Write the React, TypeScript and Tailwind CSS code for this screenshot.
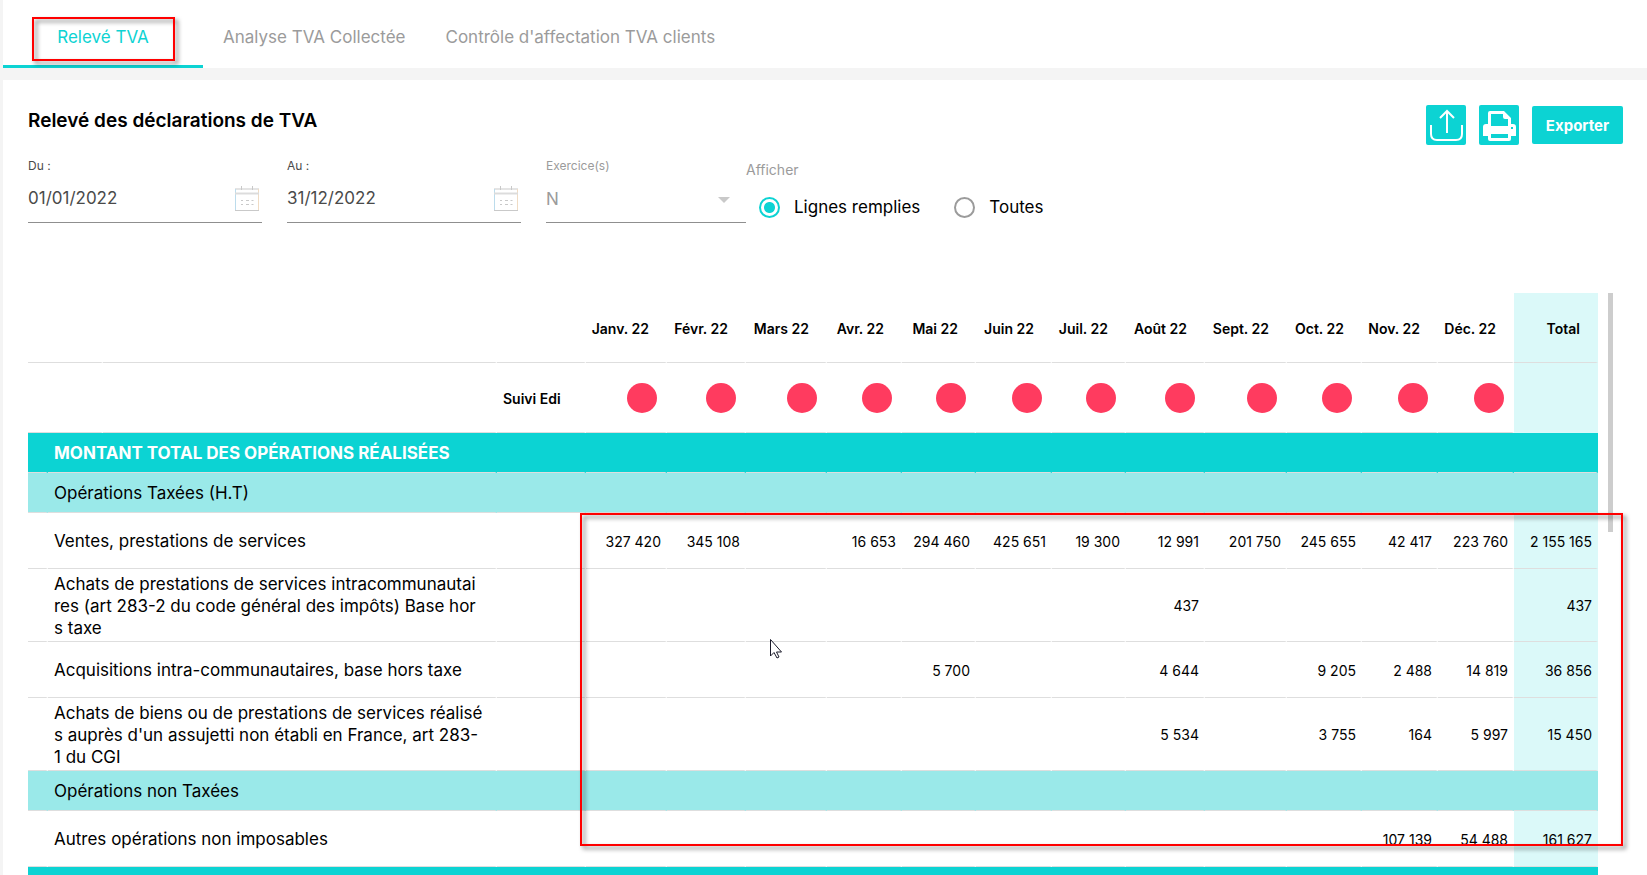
import { useState } from 'react';
import clsx from 'clsx';

type Row = {
    kind: 'section' | 'group' | 'line';
    label: string;
    tall?: boolean;
    values?: Record<number, string>;
    total?: string;
};

const TABS = ['Relevé TVA', 'Analyse TVA Collectée', "Contrôle d'affectation TVA clients"];

const MONTHS = [
    'Janv. 22', 'Févr. 22', 'Mars 22', 'Avr. 22', 'Mai 22', 'Juin 22',
    'Juil. 22', 'Août 22', 'Sept. 22', 'Oct. 22', 'Nov. 22', 'Déc. 22',
];

const ROWS: Row[] = [
    { kind: 'section', label: 'MONTANT TOTAL DES OPÉRATIONS RÉALISÉES' },
    { kind: 'group', label: 'Opérations Taxées (H.T)' },
    {
        kind: 'line',
        label: 'Ventes, prestations de services',
        values: {
            0: '327 420', 1: '345 108', 3: '16 653', 4: '294 460', 5: '425 651', 6: '19 300',
            7: '12 991', 8: '201 750', 9: '245 655', 10: '42 417', 11: '223 760',
        },
        total: '2 155 165',
    },
    {
        kind: 'line',
        tall: true,
        label: 'Achats de prestations de services intracommunautai\nres (art 283-2 du code général des impôts) Base hor\ns taxe',
        values: { 7: '437' },
        total: '437',
    },
    {
        kind: 'line',
        label: 'Acquisitions intra-communautaires, base hors taxe',
        values: { 4: '5 700', 7: '4 644', 9: '9 205', 10: '2 488', 11: '14 819' },
        total: '36 856',
    },
    {
        kind: 'line',
        tall: true,
        label: "Achats de biens ou de prestations de services réalisé\ns auprès d'un assujetti non établi en France, art 283-\n1 du CGI",
        values: { 7: '5 534', 9: '3 755', 10: '164', 11: '5 997' },
        total: '15 450',
    },
    { kind: 'group', label: 'Opérations non Taxées' },
    {
        kind: 'line',
        label: 'Autres opérations non imposables',
        values: { 10: '107 139', 11: '54 488' },
        total: '161 627',
    },
    { kind: 'section', label: '' },
];

const CELL = 'border-b border-r-2 border-b-[#dedede] border-r-transparent';
const HEAD = 'pt-0.5 pb-0 pl-0 pr-4 text-right font-semibold whitespace-nowrap';
const AMOUNT = 'pt-0.5 pb-0 pl-0 pr-1 text-right text-sm whitespace-nowrap';

function UploadIcon() {
    return (
        <svg width="40" height="40" viewBox="0 0 40 40" fill="none" stroke="white" strokeWidth="2">
            <path d="M21 28V6M14 13l7-7 7 7" />
            <path d="M5 20v9c0 4 2.500 6 6 6h19c3.500 0 6-2 6-6v-9" />
        </svg>
    );
}

function PrintIcon() {
    return (
        <svg width="40" height="40" viewBox="0 0 40 40">
            <path
                fill="white"
                fillRule="evenodd"
                d="M9 8q0-2 2-2h14l7 7v6h2q3 0 3 3v9h-5v3q0 2-2 2H11q-2 0-2-2v-3H4v-9q0-3 3-3h2zM12 9v12h17v-7h-3q-2 0-2-2V9zM12 29v4h17v-4zM32 22v2h2v-2z"
            />
        </svg>
    );
}

function CalendarIcon() {
    return (
        <svg width="26" height="26" viewBox="0 0 26 26" fill="none" stroke="#c9c9c9">
            <path d="M1 3h24M1 24.500h24" />
            <path d="M1.500 3v21" stroke="#bcdcec" />
            <path d="M24.500 3v21" stroke="#f0dcc4" />
            <path d="M1 7.500h24" stroke="#dcdcdc" strokeWidth="2" />
            <path d="M7.500 0v4M18.500 0v4" />
            <path d="M7 14.500h2M12 14.500h3M17.500 14.500h2M7 18.500h2M12 18.500h3M17.500 18.500h2" />
        </svg>
    );
}

function DateField({ id, label, value }: { id: string; label: string; value: string }) {
    return (
        <div className="w-[234px] text-[#4a4a4a]">
            <label htmlFor={id} className="block text-xs leading-5">{label}</label>
            <div className="flex items-center justify-between border-b border-[#8f8f8f] h-[47px] pr-0.5">
                <input id={id} defaultValue={value} className="w-40 text-[17px] outline-none bg-transparent" />
                <button type="button" aria-label="Ouvrir le calendrier"><CalendarIcon /></button>
            </div>
        </div>
    );
}

function RadioOption({ label, checked, onChange }: { label: string; checked: boolean; onChange: () => void }) {
    return (
        <label className="flex items-center gap-3.5 text-[17px]">
            <input
                type="radio"
                name="lignes"
                checked={checked}
                onChange={onChange}
                className="appearance-none size-[21px] rounded-full border-2 border-[#9b9b9b] checked:border-[#0cd3d3] checked:bg-[radial-gradient(circle,#0cd3d3_5px,white_6px)]"
            />
            {label}
        </label>
    );
}

function StatementTable() {
    return (
        <table className="flex-1 table-fixed border-separate border-spacing-0 w-full">
            <colgroup>
                <col className="w-[20px]" />
                <col className="w-[55px]" />
                <col className="w-[394px]" />
                <col className="w-[89px]" />
                <col className="w-[81px]" />
                <col className="w-[79px]" />
                <col className="w-[81px]" />
                <col className="w-[75px]" />
                <col className="w-[74px]" />
                <col className="w-[76px]" />
                <col className="w-[74px]" />
                <col className="w-[79px]" />
                <col className="w-[82px]" />
                <col className="w-[75px]" />
                <col className="w-[76px]" />
                <col className="w-[76px]" />
                <col className="w-[84px]" />
            </colgroup>
            <thead className="text-sm font-semibold">
                <tr className="h-[70px]">
                    <td className={CELL} colSpan={2} />
                    <td className={CELL} />
                    <td className={CELL} />
                    {MONTHS.map((m) => (
                        <th key={m} className={clsx(CELL, HEAD)}>{m}</th>
                    ))}
                    <th className={clsx(CELL, HEAD, 'bg-[#dbf9f9]')}>Total</th>
                </tr>
                <tr className="h-[70px]">
                    <td className={CELL} colSpan={2} />
                    <td className={CELL} />
                    <th className={clsx(CELL, 'p-0 pl-1.5 pt-0.5 text-left font-semibold')}>Suivi Edi</th>
                    {MONTHS.map((m) => (
                        <td key={m} className={clsx(CELL, 'p-0 pr-2')}>
                            <span className="block ml-auto size-[30px] rounded-full bg-[#ff3b5f]" />
                        </td>
                    ))}
                    <td className="bg-[#dbf9f9]" />
                </tr>
            </thead>
            <tbody>
                {ROWS.map((row, i) => (
                    <tr
                        key={i}
                        className={clsx(
                            row.kind === 'section' && 'h-10 bg-[#0cd3d3] text-white font-bold',
                            row.kind === 'group' && 'h-10 bg-[#9ae9e9]',
                            row.kind === 'line' && (row.tall ? 'h-[73px]' : 'h-14'),
                        )}
                    >
                        <td className={CELL} />
                        <td
                            className={clsx(CELL, 'p-0 pl-1.5 text-[17px] leading-[22px] whitespace-pre', row.tall && 'pt-0.5')}
                            colSpan={2}
                        >
                            {row.label}
                        </td>
                        <td className={CELL} />
                        {MONTHS.map((m, c) => (
                            <td key={m} className={clsx(CELL, AMOUNT)}>{row.values?.[c]}</td>
                        ))}
                        <td className={clsx(CELL, AMOUNT, row.kind === 'line' && 'bg-[#dbf9f9]')}>{row.total}</td>
                    </tr>
                ))}
            </tbody>
        </table>
    );
}

export default function App() {
    const [tab, setTab] = useState(0);
    const [filled, setFilled] = useState(true);

    return (
        <div className="relative flex flex-col gap-3 h-screen overflow-hidden bg-[#f4f4f4] pl-[3px] text-black font-[Inter,sans-serif]">
            <nav className="flex shrink-0 h-[68px] bg-white">
                {TABS.map((t, i) => (
                    <button
                        key={t}
                        type="button"
                        onClick={() => setTab(i)}
                        className={clsx(
                            'h-full min-w-[200px] px-5 pt-2.5 border-b-3 text-[17px]',
                            i === tab ? 'border-[#0cd3d3] text-[#0cd3d3]' : 'border-transparent text-[#9b9b9b]',
                        )}
                    >
                        {t}
                    </button>
                ))}
            </nav>

            <main className="flex-1 min-h-0 overflow-hidden bg-white pl-[25px] pt-6">
                <div className="flex justify-between pr-6">
                    <h1 className="pt-px text-[19px] leading-8 font-semibold">Relevé des déclarations de TVA</h1>
                    <div className="flex items-center gap-[13px] h-[42px]">
                        <button type="button" aria-label="Envoyer" className="rounded-xs bg-[#0cd3d3]"><UploadIcon /></button>
                        <button type="button" aria-label="Imprimer" className="rounded-xs bg-[#0cd3d3]"><PrintIcon /></button>
                        <button type="button" className="h-[38px] w-[91px] pt-0.5 rounded-xs bg-[#0cd3d3] text-white text-[15px] font-bold">Exporter</button>
                    </div>
                </div>

                <form className="flex h-[147px] pt-2.5">
                    <div className="flex gap-[25px]">
                        <DateField id="du" label="Du :" value="01/01/2022" />
                        <DateField id="au" label="Au :" value="31/12/2022" />
                        <div className="w-[200px] text-[#9b9b9b]">
                            <label htmlFor="exercice" className="block text-xs leading-5">Exercice(s)</label>
                            <div className="flex items-center border-b border-[#8f8f8f] h-[47px] pt-0.5">
                                <select id="exercice" className="appearance-none flex-1 text-[17px] outline-none">
                                    <option>N</option>
                                </select>
                                <span className="mr-4 border-x-6 border-t-6 border-x-transparent border-t-[#c9c9c9]" />
                            </div>
                        </div>
                    </div>
                    <fieldset>
                        <legend className="pt-0.5 text-sm leading-6 text-[#9b9b9b]">Afficher</legend>
                        <div className="flex gap-[34px] pl-[13px] pt-[13px]">
                            <RadioOption label="Lignes remplies" checked={filled} onChange={() => setFilled(true)} />
                            <RadioOption label="Toutes" checked={!filled} onChange={() => setFilled(false)} />
                        </div>
                    </fieldset>
                </form>

                <div className="flex items-start gap-2.5 pr-[34px]">
                    <StatementTable />
                    <div className="w-[5px] h-[239px] shrink-0 bg-[#cdcdcd]" />
                </div>
            </main>

            {/* highlights and pointer drawn over the page */}
            <div className="pointer-events-none absolute left-8 top-[17px] w-[143px] h-11 border-2 border-[#f00] drop-shadow-[3px_3px_2px_rgba(0,0,0,0.5)]" />
            <div className="pointer-events-none absolute left-[580px] right-6 top-[513px] h-[333px] border-2 border-[#f00] drop-shadow-[3px_3px_2px_rgba(0,0,0,0.5)]" />
            <svg className="pointer-events-none absolute left-[770px] top-[639px]" width="13" height="20" viewBox="0 0 13 20">
                <path d="M.5.500v16.500l3.500-3.500 3 5.500 2-1-2.500-5h5z" fill="white" stroke="#1a1a2a" />
            </svg>
        </div>
    );
}
